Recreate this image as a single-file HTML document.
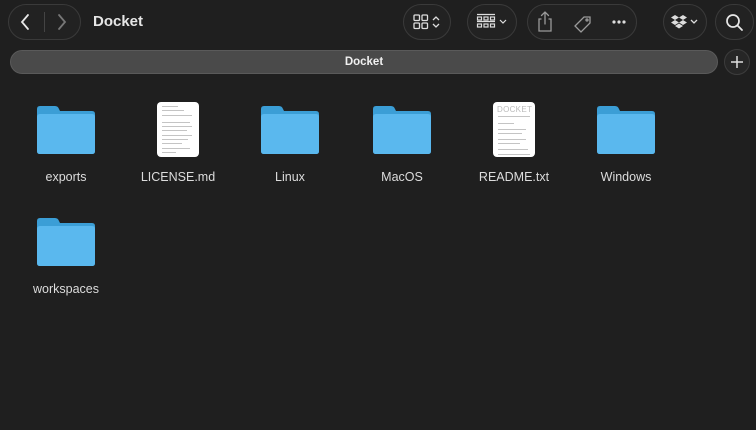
<!DOCTYPE html>
<html><head><style>
*{margin:0;padding:0;box-sizing:border-box}
body{width:756px;height:430px;background:#1f1f1f;font-family:"Liberation Sans",sans-serif;overflow:hidden;position:relative;color:#e0e0e0}
.pill{position:absolute;border:1px solid #3a3a3a;border-radius:18px;background:#222}
.ab{position:absolute}
.lbl{position:absolute;width:112px;text-align:center;font-size:12.5px;color:#dcdcdc}
.fold{position:absolute;width:58px;height:48px}
.doc{position:absolute;width:42px;height:55px;background:#fff;border-radius:4px;overflow:hidden}
.doc i{position:absolute;left:5px;height:1px;background:#c4c4c4;display:block}
</style></head><body>
<div class="pill" style="left:8px;top:4px;width:73px;height:36px"></div>
<div class="ab" style="left:44px;top:12px;width:1px;height:20px;background:#444"></div>
<svg class="ab" style="left:18px;top:12px" width="14" height="20"><path d="M10 3 L4 10 L10 17" stroke="#e8e8e8" stroke-width="1.8" fill="none" stroke-linecap="round"/></svg>
<svg class="ab" style="left:55px;top:12px" width="14" height="20"><path d="M4 3 L10 10 L4 17" stroke="#777" stroke-width="1.8" fill="none" stroke-linecap="round"/></svg>
<div class="ab" style="left:93px;top:13px;font-size:15px;font-weight:bold;color:#e6e6e6">Docket</div>

<div class="pill" style="left:403px;top:4px;width:48px;height:36px"></div>
<svg class="ab" style="left:413px;top:14px" width="32" height="16"><g fill="none" stroke="#ddd" stroke-width="1.3"><rect x="1" y="1" width="5.5" height="5.5" rx="1"/><rect x="9" y="1" width="5.5" height="5.5" rx="1"/><rect x="1" y="9" width="5.5" height="5.5" rx="1"/><rect x="9" y="9" width="5.5" height="5.5" rx="1"/><path d="M20 6 L23 3 L26 6 M20 10 L23 13 L26 10"/></g></svg>
<div class="pill" style="left:467px;top:4px;width:50px;height:36px"></div>
<svg class="ab" style="left:476px;top:13px" width="36" height="18"><g fill="none" stroke="#ddd" stroke-width="1.2"><path d="M1 1.5 H19 M1 8.5 H19"/><rect x="1.5" y="4" width="4" height="3"/><rect x="8" y="4" width="4" height="3"/><rect x="14.5" y="4" width="4" height="3"/><rect x="1.5" y="11" width="4" height="3"/><rect x="8" y="11" width="4" height="3"/><rect x="14.5" y="11" width="4" height="3"/><path d="M24 7 L27 10 L30 7"/></g></svg>
<div class="pill" style="left:527px;top:4px;width:110px;height:36px"></div>
<svg class="ab" style="left:535px;top:9px" width="96" height="26"><g fill="none" stroke="#9a9a9a" stroke-width="1.3" stroke-linecap="round"><path d="M6 10 H4 V22 H16 V10 H14 M10 3 V15 M6.5 6.5 L10 3 L13.5 6.5"/><path d="M40 17 L49 8 H55 V14 L46 23 Z"/><circle cx="52" cy="11" r="1"/></g><g fill="#ddd"><circle cx="79" cy="13" r="1.6"/><circle cx="84" cy="13" r="1.6"/><circle cx="89" cy="13" r="1.6"/></g></svg>
<div class="pill" style="left:663px;top:4px;width:44px;height:36px"></div>
<svg class="ab" style="left:671px;top:13px" width="32" height="18"><g fill="#ddd"><path d="M4 2 L8 4.5 L4 7 L0 4.5Z M12 2 L16 4.5 L12 7 L8 4.5Z M4 7 L8 9.5 L4 12 L0 9.5Z M12 7 L16 9.5 L12 12 L8 9.5Z M8 10.5 L12 13 L8 15.5 L4 13Z"/></g><path d="M20 7 L23 10 L26 7" fill="none" stroke="#ddd" stroke-width="1.3"/></svg>
<div class="pill" style="left:715px;top:4px;width:39px;height:36px"></div>
<svg class="ab" style="left:724px;top:12px" width="22" height="22"><circle cx="9" cy="9" r="6" fill="none" stroke="#e6e6e6" stroke-width="1.7"/><path d="M13.5 13.5 L18 18" stroke="#e6e6e6" stroke-width="1.8" stroke-linecap="round"/></svg>

<div class="ab" style="left:10px;top:50px;width:708px;height:24px;border-radius:12px;background:#4a4a4a;border:1px solid #5a5a5a"></div>
<div class="ab" style="left:10px;top:56px;width:708px;text-align:center;font-size:11.5px;font-weight:bold;color:#f0f0f0">Docket</div>
<div class="ab" style="left:724px;top:49px;width:26px;height:26px;border-radius:13px;border:1px solid #3c3c3c;background:#262626"></div>
<svg class="ab" style="left:730px;top:55px" width="14" height="14"><path d="M7 1 V13 M1 7 H13" stroke="#ddd" stroke-width="1.5"/></svg>

<svg width="0" height="0" style="position:absolute"><defs><g id="f"><path d="M0 3 Q0 0 3 0 H18 Q21 0 22 3 L23 5 H55 Q58 5 58 8 V45 Q58 48 55 48 H3 Q0 48 0 45Z" fill="#3b9ed6"/><path d="M0 11 Q0 8 3 8 H55 Q58 8 58 11 V45 Q58 48 55 48 H3 Q0 48 0 45Z" fill="#5ab8ee"/></g></defs></svg>
<svg class="fold" style="left:37px;top:106px"><use href="#f"/></svg>
<svg class="fold" style="left:261px;top:106px"><use href="#f"/></svg>
<svg class="fold" style="left:373px;top:106px"><use href="#f"/></svg>
<svg class="fold" style="left:597px;top:106px"><use href="#f"/></svg>
<svg class="fold" style="left:37px;top:218px"><use href="#f"/></svg>

<div class="doc" style="left:157px;top:102px"><i style="top:4px;width:16px"></i><i style="top:8px;width:22px"></i><i style="top:13px;width:30px"></i><i style="top:20px;width:28px"></i><i style="top:24px;width:30px"></i><i style="top:28px;width:25px"></i><i style="top:33px;width:30px"></i><i style="top:37px;width:26px"></i><i style="top:41px;width:20px"></i><i style="top:46px;width:28px"></i><i style="top:50px;width:14px"></i></div>
<div class="doc" style="left:493px;top:102px"><div style="position:absolute;left:4px;top:3px;font-size:8px;color:#bbb;letter-spacing:.3px">DOCKET</div><i style="top:14px;width:32px"></i><i style="top:21px;width:16px"></i><i style="top:27px;width:28px"></i><i style="top:31px;width:24px"></i><i style="top:37px;width:28px"></i><i style="top:41px;width:22px"></i><i style="top:47px;width:30px"></i><i style="top:52px;width:32px"></i></div>

<div class="lbl" style="left:10px;top:170px">exports</div>
<div class="lbl" style="left:122px;top:170px">LICENSE.md</div>
<div class="lbl" style="left:234px;top:170px">Linux</div>
<div class="lbl" style="left:346px;top:170px">MacOS</div>
<div class="lbl" style="left:458px;top:170px">README.txt</div>
<div class="lbl" style="left:570px;top:170px">Windows</div>
<div class="lbl" style="left:10px;top:282px">workspaces</div>
</body></html>
